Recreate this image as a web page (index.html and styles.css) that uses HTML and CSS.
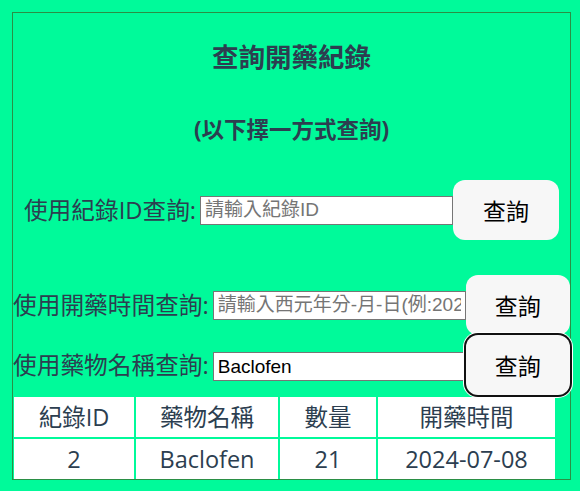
FILE: index.html
```html
<!DOCTYPE html>
<html lang="zh-Hant">
<head>
<meta charset="utf-8">
<title>查詢開藥紀錄</title>
<link rel="stylesheet" href="styles.css">
</head>
<body>
<div class="panel">
  <h2 class="title">查詢開藥紀錄</h2>
  <h3 class="subtitle">(以下擇一方式查詢)</h3>
  <div class="row row-first">
    <label class="label">使用紀錄ID查詢:</label>
    <input class="field field-id" type="text" placeholder="請輸入紀錄ID">
    <button class="btn">查詢</button>
  </div>
  <div class="row row-second">
    <label class="label">使用開藥時間查詢:</label>
    <input class="field" type="text" placeholder="請輸入西元年分-月-日(例:2024-07-08)">
    <button class="btn">查詢</button>
  </div>
  <div class="row row-third">
    <label class="label">使用藥物名稱查詢:</label>
    <input class="field" type="text" value="Baclofen">
    <button class="btn btn-focus">查詢</button>
  </div>
  <table class="result">
    <colgroup>
      <col class="c1"><col class="c2"><col class="c3"><col class="c4">
    </colgroup>
    <thead>
      <tr><th>紀錄ID</th><th>藥物名稱</th><th>數量</th><th>開藥時間</th></tr>
    </thead>
    <tbody>
      <tr><td>2</td><td>Baclofen</td><td>21</td><td>2024-07-08</td></tr>
    </tbody>
  </table>
</div>
</body>
</html>
```
FILE: styles.css
```css
html, body {
  margin: 0;
  padding: 0;
  background: #00fa9a;
}
body {
  font-family: "Open Sans", "Noto Sans CJK TC", sans-serif;
  color: #2c3e50;
}
.panel {
  margin: 12px 9px 12px 12px;
  border: 1px solid #2a8f45;
  height: 466px;
  box-sizing: content-box;
  display: flex;
  flex-direction: column;
  align-items: stretch;
}
.title {
  margin: 26px 0 0;
  font-size: 26.5px;
  line-height: 36px;
  font-weight: bold;
  text-align: center;
}
.subtitle {
  margin: 40px 0 0;
  font-size: 22.5px;
  line-height: 30px;
  font-weight: bold;
  text-align: center;
}
.row {
  display: flex;
  justify-content: center;
  align-items: center;
  height: 60px;
}
.row-first {
  margin-top: 35px;
}
.row-second {
  margin-top: 35px;
}
.row-third .field {
  margin-top: 3px;
}
.label {
  font-size: 23.7px;
  line-height: 30px;
  margin-right: 4px;
  white-space: nowrap;
}
.field {
  width: 253px;
  height: 29px;
  box-sizing: border-box;
  border: 1px solid #767676;
  padding: 1px 4px;
  margin: 0;
  background: #fff;
  color: #000;
  font-family: "Liberation Sans", "Noto Sans CJK TC", sans-serif;
  font-size: 19px;
  border-radius: 0;
  outline: none;
}
.field::placeholder {
  color: #757575;
}
.btn {
  width: 106px;
  height: 60px;
  margin: 0;
  border: none;
  border-radius: 12px;
  background: #f7f7f7;
  color: #000;
  font-family: "Open Sans", "Noto Sans CJK TC", sans-serif;
  font-size: 23px;
  padding: 0;
}
.btn-focus {
  box-shadow: 0 0 0 2px #111, 0 0 0 3px #fff;
}
.result {
  border-collapse: separate;
  border-spacing: 2px;
  table-layout: fixed;
  width: 545px;
  margin: 0 0 0 -1px;
}
.c1 { width: 120px; }
.c2 { width: 142px; }
.c3 { width: 96px; }
.c4 { width: 177px; }
.result th,
.result td {
  background: #fff;
  font-weight: normal;
  font-size: 23.5px;
  line-height: 40px;
  height: 40px;
  padding: 0;
  text-align: center;
  white-space: nowrap;
}
```
